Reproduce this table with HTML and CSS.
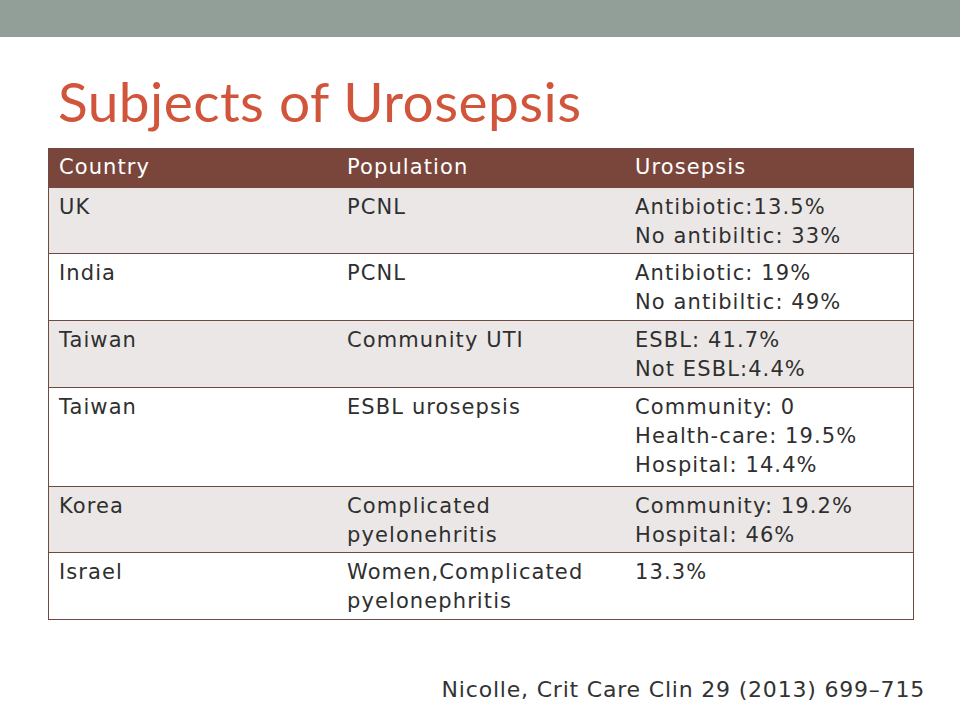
FILE: index.html
```html
<!DOCTYPE html>
<html lang="en">
<head>
<meta charset="utf-8">
<title>Subjects of Urosepsis</title>
<link rel="stylesheet" href="styles.css">
</head>
<body>
<div class="slide">
  <div class="topbar"></div>
  <h1 class="title">Subjects of Urosepsis</h1>
  <table class="data">
    <thead>
      <tr class="head"><th>Country</th><th>Population</th><th>Urosepsis</th></tr>
    </thead>
    <tbody>
      <tr class="shade r66"><td>UK</td><td>PCNL</td><td>Antibiotic:13.5%<br>No antibiltic: 33%</td></tr>
      <tr class="r67"><td>India</td><td>PCNL</td><td>Antibiotic: 19%<br>No antibiltic: 49%</td></tr>
      <tr class="shade r67"><td>Taiwan</td><td>Community UTI</td><td>ESBL: 41.7%<br>Not ESBL:4.4%</td></tr>
      <tr class="r99"><td>Taiwan</td><td>ESBL urosepsis</td><td>Community: 0<br>Health-care: 19.5%<br>Hospital: 14.4%</td></tr>
      <tr class="shade r66"><td>Korea</td><td>Complicated<br>pyelonehritis</td><td>Community: 19.2%<br>Hospital: 46%</td></tr>
      <tr class="r67"><td>Israel</td><td>Women,Complicated<br>pyelonephritis</td><td>13.3%</td></tr>
    </tbody>
  </table>
  <p class="cite">Nicolle, Crit Care Clin 29 (2013) 699–715</p>
</div>
</body>
</html>
```
FILE: styles.css
```css
html, body {
  margin: 0;
  padding: 0;
  background: #ffffff;
}
.slide {
  width: 960px;
  height: 720px;
  overflow: hidden;
  display: flex;
  flex-direction: column;
}
.topbar {
  height: 37px;
  background: #929f98;
  flex: none;
}
.title {
  margin: 28px 0 0 58px;
  font-family: "Lato", "Open Sans", sans-serif;
  font-weight: 400;
  font-size: 55px;
  letter-spacing: 0.45px;
  line-height: 72px;
  color: #d0553b;
  height: 83px;
  flex: none;
}
.data {
  margin-left: 48px;
  width: 866px;
  border-collapse: collapse;
  table-layout: fixed;
  font-family: "DejaVu Sans", "Verdana", sans-serif;
  font-size: 21px;
  letter-spacing: 1.1px;
  line-height: 29px;
  color: #2f2f2f;
  border: 1px solid #6e4a43;
  flex: none;
}
.data th {
  background: #7a463c;
  color: #ffffff;
  font-weight: 400;
  text-align: left;
  vertical-align: top;
  padding: 4px 11px 0 10px;
}
.data td {
  text-align: left;
  vertical-align: top;
  padding: 5px 11px 0 10px;
  border-top: 1px solid #6e4a43;
}
.data tr.head { height: 39px; }
.data tr.r66 { height: 66px; }
.data tr.r67 { height: 67px; }
.data tr.r99 { height: 99px; }
.data tr.shade td {
  background: #ebe7e6;
}
.data th:nth-child(1), .data td:nth-child(1) { width: 267px; }
.data th:nth-child(2), .data td:nth-child(2) { width: 267px; }
.cite {
  margin: 57px 35px 0 0;
  align-self: flex-end;
  font-family: "DejaVu Sans", "Verdana", sans-serif;
  font-size: 22px;
  letter-spacing: 0.8px;
  color: #333333;
}
```
